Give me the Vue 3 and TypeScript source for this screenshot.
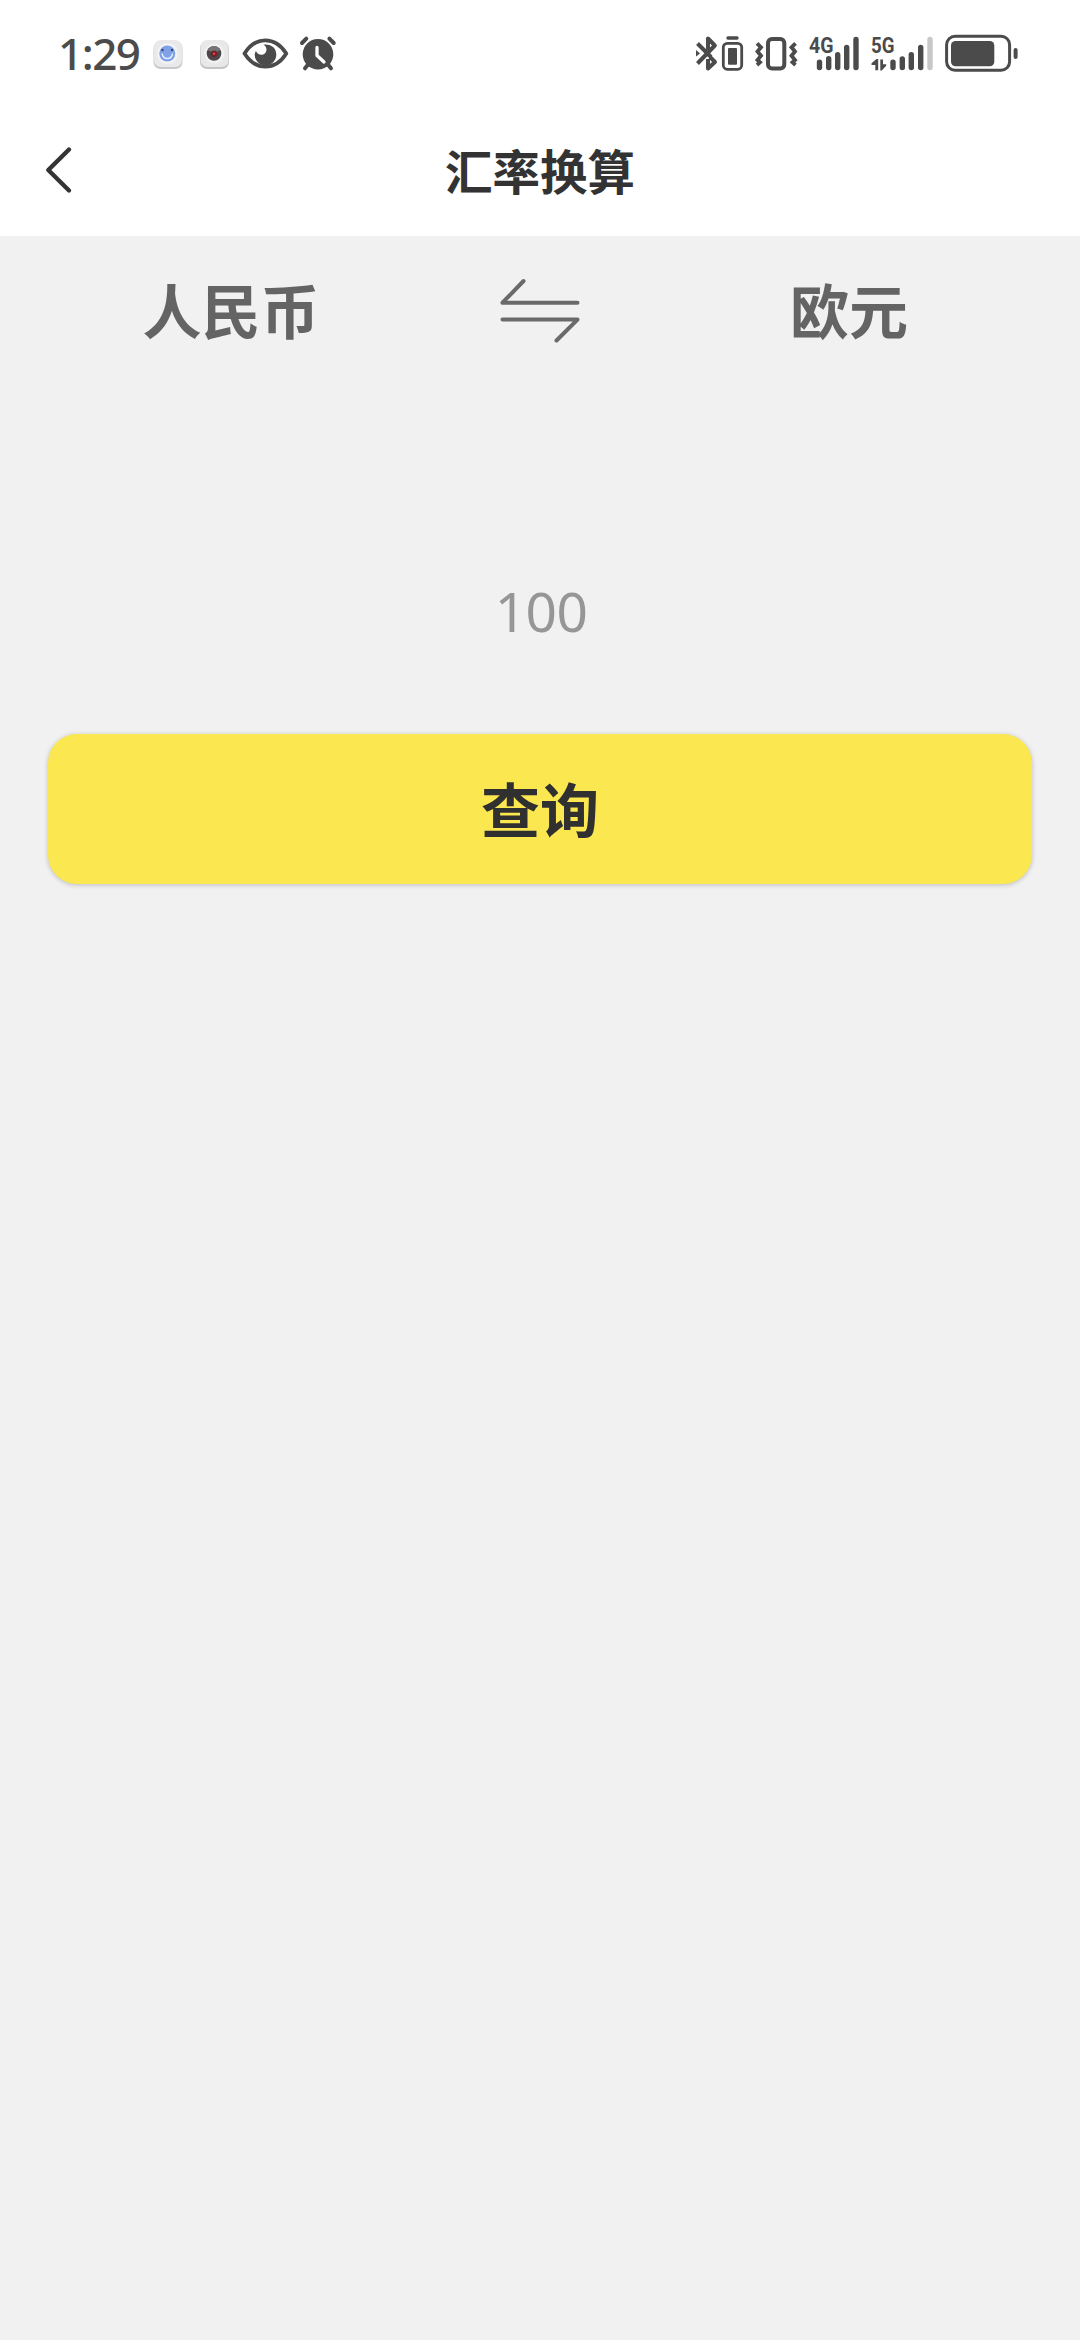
<script setup lang="ts">
import { ref } from 'vue'

const source = ref('人民币')
const target = ref('欧元')
const amount = ref('')

function swap(): void {
  const previous = source.value
  source.value = target.value
  target.value = previous
}
</script>

<template>
  <div class="screen">
    <div class="status">
      <span class="time">1:29</span>
      <svg width="44" height="108" viewBox="146 0 44 108">
        <rect x="153.5" y="41" width="29" height="28" rx="7" fill="#c9c9cc" />
        <rect x="154" y="40" width="28" height="27" rx="7" fill="#e9e9eb" />
        <circle cx="167.5" cy="53.5" r="10.5" fill="#f3f3f5" />
        <circle cx="167.3" cy="53.5" r="8" fill="#7fa2e6" />
        <path d="M162 53.5q1 5 5.300 5t5.300-5" fill="none" stroke="#e4edff" stroke-width="1.300" />
        <circle cx="162.500" cy="50" r="1.200" fill="#34466e" />
        <circle cx="172" cy="50" r="1.200" fill="#34466e" />
      </svg>
      <svg width="46" height="108" viewBox="190 0 46 108">
        <rect x="200" y="41" width="29" height="28" rx="7" fill="#c4c4c6" />
        <rect x="200.500" y="40" width="28" height="27" rx="7" fill="#e8e8e9" />
        <circle cx="214.300" cy="53.500" r="10" fill="#f1f1f2" />
        <circle cx="214" cy="53.500" r="7.300" fill="#4b484b" />
        <path d="M207.500 50a7.300 7.300 0 0 1 13 0l-6.500 3z" fill="#777477" />
        <circle cx="214" cy="53.800" r="3.200" fill="#6d2229" />
        <circle cx="214" cy="53.700" r="1.300" fill="#ee3c48" />
      </svg>
      <svg width="58" height="108" viewBox="236 0 58 108">
        <path d="M244.500 53.500C250 45 257 40.300 265.300 40.300S281 45 286.300 53.500C281 62 273.600 66.700 265.300 66.700S250 62 244.500 53.500z" fill="none" stroke="#4b4b4b" stroke-width="3.800" stroke-linejoin="round" />
        <path d="M263.500 44.600C271 43.500 276.300 48 276.300 54.500A10.800 10.800 0 0 1 254.700 54.500Q254.700 52.500 256 51C257 54.500 262 56 264.800 53.500C267.500 51 267 47 263.500 44.600z" fill="#4b4b4b" />
      </svg>
      <svg width="52" height="108" viewBox="294 0 52 108">
        <g stroke="#4b4b4b" stroke-linecap="round">
          <path d="M302 43l4.300-4.300M333.700 43l-4.300-4.300" stroke-width="4" />
          <path d="M308.500 64l-3.500 4.300M327.500 64l3.500 4.300" stroke-width="4" />
        </g>
        <circle cx="318" cy="54.200" r="15.300" fill="#4b4b4b" />
        <path d="M317 47.500v8l7 6.500" fill="none" stroke="#fff" stroke-width="3.300" stroke-linecap="round" stroke-linejoin="round" />
      </svg>
      <span class="spacer"></span>
      <svg width="40" height="108" viewBox="680 0 40 108">
        <g fill="none" stroke="#4b4b4b" stroke-width="4" stroke-linejoin="round">
          <path d="M697.500 43.500L711 57M697.500 63.500L714.800 45.500L708 38.500V50" />
          <path d="M708 59V68.500L715 62L710 57" />
        </g>
        <path d="M696 50l4 3.500-4 3z" fill="#4b4b4b" />
      </svg>
      <svg width="30" height="108" viewBox="720 0 30 108">
        <path d="M728 38h9" stroke="#4b4b4b" stroke-width="3.400" stroke-linecap="round" />
        <rect x="723.300" y="43.300" width="18.400" height="26" rx="4" fill="none" stroke="#4b4b4b" stroke-width="2.800" />
        <rect x="728" y="48" width="9" height="16.700" rx="1" fill="#4b4b4b" />
      </svg>
      <svg width="52" height="108" viewBox="750 0 52 108">
        <rect x="768" y="39" width="16.300" height="29.500" rx="4" fill="none" stroke="#4b4b4b" stroke-width="4" />
        <path d="M757 43.300l4 4-3.500 4.200 3.500 4.300-3.500 4.200 2.500 2.300-3 2.700M795.500 43.300l-4 4 3.500 4.200-3.500 4.300 3.500 4.200-2.500 2.300 3 2.700" fill="none" stroke="#4b4b4b" stroke-width="3.800" />
      </svg>
      <svg class="signal" width="62" height="108" viewBox="802 0 62 108">
        <text x="809" y="53" textLength="24.500" lengthAdjust="spacingAndGlyphs">4G</text>
        <path d="M819.500 62.300v5.300M828.700 58.700v8.900M837.700 54.700v12.900M846.700 47.500v20.100M856 39.500v28.100" />
      </svg>
      <svg class="signal" width="74" height="108" viewBox="864 0 74 108">
        <text x="871" y="53" textLength="23.500" lengthAdjust="spacingAndGlyphs">5G</text>
        <path d="M893 62.300v5.300M902.300 59v8.600M911.300 54.700v12.900M920.700 47.500v20.100" />
        <path class="weak" d="M930 39.500v28.100" />
        <path class="data" d="M871.500 65v-1.700l5-4.300h1.700v11.300h-2.900V65zM880.300 59.500h2.700v4.800h3.200v1.500l-4.400 4.700h-1.500z" />
      </svg>
      <svg width="92" height="108" viewBox="938 0 92 108">
        <rect x="946.600" y="36.300" width="63" height="34" rx="8.500" fill="none" stroke="#4b4b4b" stroke-width="3" />
        <rect x="951" y="41" width="43.300" height="25.300" rx="4.500" fill="#4b4b4b" />
        <path d="M1015.600 50v7" stroke="#4b4b4b" stroke-width="4" stroke-linecap="round" />
      </svg>
    </div>

    <header class="header">
      <button class="back" aria-label="返回">
        <svg width="48" height="64" viewBox="36 139 48 64">
          <path d="M69 149.500L48.300 170L69 190.500" fill="none" stroke="#343434" stroke-width="4.400" stroke-linecap="round" stroke-linejoin="round" />
        </svg>
      </button>
      <h1>汇率换算</h1>
      <span class="balance"></span>
    </header>

    <main>
      <div class="pair">
        <button class="currency">{{ source }}</button>
        <button class="swap" aria-label="互换" @click="swap">
          <svg width="90" height="76" viewBox="495 273 90 76">
            <path d="M523.500 281L502.500 302.700H577.500M502.500 319.600H577.500L556.500 340.500" fill="none" stroke="#6a6a6a" stroke-width="4" stroke-linecap="round" stroke-linejoin="round" />
          </svg>
        </button>
        <button class="currency">{{ target }}</button>
      </div>
      <input v-model="amount" class="amount" placeholder="100" />
      <button class="query">查询</button>
    </main>
  </div>
</template>

<style>
body {
  background: #f1f1f1;
}
</style>

<style scoped>
.screen {
  min-height: 2340px;
  background: #f1f1f1;
  font-family: "Noto Sans", "Noto Sans CJK SC", sans-serif;
  color: #333;
}
svg {
  display: block;
  flex: none;
}
button {
  border: 0;
  padding: 0;
  background: none;
  font-family: "Noto Sans CJK SC", sans-serif;
  color: inherit;
}
.status {
  display: flex;
  align-items: center;
  box-sizing: border-box;
  height: 108px;
  padding: 0 50px 0 58px;
  background: #fff;
}
.time {
  width: 88px;
  padding-bottom: 2px;
  font-size: 44px;
  font-weight: 500;
  line-height: 106px;
  letter-spacing: -1.5px;
  white-space: nowrap;
  color: #4b4b4b;
}
.spacer {
  flex: 1;
}
.signal text {
  font-family: Roboto, sans-serif;
  font-size: 22px;
  font-weight: 700;
  fill: #4b4b4b;
}
.signal path {
  fill: none;
  stroke: #4b4b4b;
  stroke-width: 5.4px;
  stroke-linecap: round;
}
.signal .weak {
  stroke: #c8c8c8;
}
.signal .data {
  fill: #4b4b4b;
  stroke: none;
}
.header {
  display: flex;
  align-items: center;
  justify-content: space-between;
  height: 128px;
  padding: 0 36px;
  background: #fff;
}
.back,
.balance {
  width: 48px;
}
.back {
  margin-top: -2px;
}
h1 {
  margin: 0;
  padding-bottom: 5px;
  font-family: "Noto Sans CJK SC", sans-serif;
  font-size: 47.5px;
  font-weight: 700;
  line-height: 72px;
}
.pair {
  display: flex;
  align-items: center;
  height: 150px;
}
.currency {
  flex: 1;
  padding-bottom: 4px;
  font-size: 59px;
  font-weight: 700;
  line-height: 88px;
  color: #646464;
}
.swap {
  width: 156px;
  display: flex;
  justify-content: center;
}
.amount {
  display: block;
  box-sizing: border-box;
  width: 984px;
  height: 120px;
  margin: 164px auto 64px;
  padding: 0 0 0 2px;
  border: 0;
  outline: 0;
  background: transparent;
  font-family: "Noto Sans", sans-serif;
  font-size: 55px;
  letter-spacing: -0.7px;
  text-align: center;
  color: #333;
}
.amount::placeholder {
  color: #969696;
}
.query {
  display: block;
  width: 984px;
  height: 150px;
  margin: 0 auto;
  border-radius: 29px;
  background: #fbe74f;
  box-shadow: 0 1px 5px rgba(0, 0, 0, 0.22);
  font-size: 59px;
  font-weight: 700;
  line-height: 148px;
  padding-bottom: 2px;
  color: #303030;
}
</style>
